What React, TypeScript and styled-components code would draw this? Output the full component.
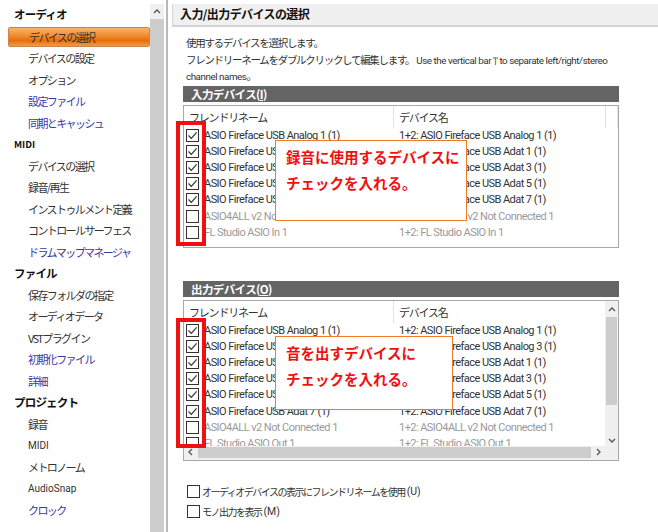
import React from 'react';
import styled, { createGlobalStyle } from 'styled-components';

const GlobalStyle = createGlobalStyle`
  html, body {
    margin: 0;
    padding: 0;
    background: #fff;
  }
  body {
    font-family: Roboto, "Noto Sans CJK JP", sans-serif;
    color: #222;
  }
`;

interface NavItem {
  label: string;
  kind?: 'head' | 'item';
  link?: boolean;
  small?: boolean;
  active?: boolean;
}

const navItems: NavItem[] = [
  { label: 'オーディオ', kind: 'head' },
  { label: 'デバイスの選択', active: true },
  { label: 'デバイスの設定' },
  { label: 'オプション' },
  { label: '設定ファイル', link: true },
  { label: '同期とキャッシュ', link: true },
  { label: 'MIDI', kind: 'head', small: true },
  { label: 'デバイスの選択' },
  { label: '録音/再生' },
  { label: 'インストゥルメント定義' },
  { label: 'コントロールサーフェス' },
  { label: 'ドラムマップマネージャ', link: true },
  { label: 'ファイル', kind: 'head' },
  { label: '保存フォルダの指定' },
  { label: 'オーディオデータ' },
  { label: 'VSTプラグイン' },
  { label: '初期化ファイル', link: true },
  { label: '詳細', link: true },
  { label: 'プロジェクト', kind: 'head' },
  { label: '録音' },
  { label: 'MIDI', small: true },
  { label: 'メトロノーム' },
  { label: 'AudioSnap', small: true },
  { label: 'クロック', link: true },
];

interface DeviceRow {
  name: string;
  device: string;
  checked: boolean;
}

const inputRows: DeviceRow[] = [
  { name: 'ASIO Fireface USB Analog 1 (1)', device: '1+2: ASIO Fireface USB Analog 1 (1)', checked: true },
  { name: 'ASIO Fireface USB Adat 1 (1)', device: '1+2: ASIO Fireface USB Adat 1 (1)', checked: true },
  { name: 'ASIO Fireface USB Adat 3 (1)', device: '1+2: ASIO Fireface USB Adat 3 (1)', checked: true },
  { name: 'ASIO Fireface USB Adat 5 (1)', device: '1+2: ASIO Fireface USB Adat 5 (1)', checked: true },
  { name: 'ASIO Fireface USB Adat 7 (1)', device: '1+2: ASIO Fireface USB Adat 7 (1)', checked: true },
  { name: 'ASIO4ALL v2 Not Connected 1', device: '1+2: ASIO4ALL v2 Not Connected 1', checked: false },
  { name: 'FL Studio ASIO In 1', device: '1+2: FL Studio ASIO In 1', checked: false },
];

const outputRows: DeviceRow[] = [
  { name: 'ASIO Fireface USB Analog 1 (1)', device: '1+2: ASIO Fireface USB Analog 1 (1)', checked: true },
  { name: 'ASIO Fireface USB Analog 3 (1)', device: '1+2: ASIO Fireface USB Analog 3 (1)', checked: true },
  { name: 'ASIO Fireface USB Adat 1 (1)', device: '1+2: ASIO Fireface USB Adat 1 (1)', checked: true },
  { name: 'ASIO Fireface USB Adat 3 (1)', device: '1+2: ASIO Fireface USB Adat 3 (1)', checked: true },
  { name: 'ASIO Fireface USB Adat 5 (1)', device: '1+2: ASIO Fireface USB Adat 5 (1)', checked: true },
  { name: 'ASIO Fireface USB Adat 7 (1)', device: '1+2: ASIO Fireface USB Adat 7 (1)', checked: true },
  { name: 'ASIO4ALL v2 Not Connected 1', device: '1+2: ASIO4ALL v2 Not Connected 1', checked: false },
  { name: 'FL Studio ASIO Out 1', device: '1+2: FL Studio ASIO Out 1', checked: false },
];

function CheckBox({ checked }: { checked: boolean }) {
  return (
    <Box>
      {checked && (
        <svg width="11" height="11" viewBox="0 0 11 11">
          <path d="M1.5 5.5 L4.3 8.3 L9.6 2.4" fill="none" stroke="#333" strokeWidth="1.2" />
        </svg>
      )}
    </Box>
  );
}

function Caret({ dir }: { dir: 'up' | 'down' | 'left' | 'right' }) {
  const d = {
    up: 'M2 6 L5 3 L8 6',
    down: 'M2 4 L5 7 L8 4',
    left: 'M6 2 L3 5 L6 8',
    right: 'M4 2 L7 5 L4 8',
  }[dir];
  return (
    <svg width="10" height="10" viewBox="0 0 10 10">
      <path d={d} fill="none" stroke="#555" strokeWidth="1.3" />
    </svg>
  );
}

function DeviceList({ rows, scroll, height }: { rows: DeviceRow[]; scroll?: boolean; height: number }) {
  return (
    <ListFrame $height={height}>
      <ListInner>
        <ListHead>
          <HeadCell $w={210}>フレンドリネーム</HeadCell>
          <HeadCell $w={212}>デバイス名</HeadCell>
          {!scroll && <HeadCell $w={12} />}
        </ListHead>
        <ListBody>
          {rows.map((r, i) => (
            <Row key={i} $disabled={!r.checked}>
              <NameCell>
                <CheckBox checked={r.checked} />
                <span>{r.name}</span>
              </NameCell>
              <DevCell>{r.device}</DevCell>
            </Row>
          ))}
        </ListBody>
        {scroll && (
          <HScroll>
            <Caret dir="left" />
            <HTrack />
            <Caret dir="right" />
          </HScroll>
        )}
      </ListInner>
      {scroll && (
        <VScroll>
          <Caret dir="up" />
          <VTrack>
            <VThumb />
          </VTrack>
          <Caret dir="down" />
          <Corner />
        </VScroll>
      )}
    </ListFrame>
  );
}

export default function App() {
  return (
    <Page>
      <GlobalStyle />
      <Sidebar>
        {navItems.map((n, i) =>
          n.kind === 'head' ? (
            <NavHead key={i} $small={n.small}>{n.label}</NavHead>
          ) : (
            <NavLink key={i} $link={n.link} $small={n.small} $active={n.active}>
              {n.label}
            </NavLink>
          )
        )}
      </Sidebar>
      <SideScroll>
        <ArrowCell>
          <Caret dir="up" />
        </ArrowCell>
      </SideScroll>
      <Divider />
      <Main>
        <TitleBar>入力/出力デバイスの選択</TitleBar>
        <Content>
          <Desc>
            <p>
              <Jp>使用するデバイスを選択します。</Jp>
            </p>
            <p>
              <Jp>フレンドリーネームをダブルクリックして編集します。</Jp> Use the vertical bar '|' to separate
              left/right/stereo
            </p>
            <p>
              channel names<Jp>。</Jp>
            </p>
          </Desc>
          <Section>
            <SectionBar>
              入力デバイス(<u>I</u>)
            </SectionBar>
            <DeviceList rows={inputRows} height={143} />
          </Section>
          <Section $gap={33}>
            <SectionBar>
              出力デバイス(<u>O</u>)
            </SectionBar>
            <DeviceList rows={outputRows} height={161} scroll />
          </Section>
          <Options>
            <OptionRow>
              <CheckBox checked={false} />
              オーディオデバイスの表示にフレンドリネームを使用<Key>(U)</Key>
            </OptionRow>
            <OptionRow>
              <CheckBox checked={false} />
              モノ出力を表示<Key>(M)</Key>
            </OptionRow>
          </Options>
        </Content>

        <Marker style={{ left: 8, top: 121, height: 125 }} />
        <Marker style={{ left: 8, top: 318, height: 130 }} />
        <Callout style={{ left: 107, top: 140, width: 192, height: 81 }}>
          <p>録音に使用するデバイスに</p>
          <p>チェックを入れる。</p>
        </Callout>
        <Callout style={{ left: 107, top: 336, width: 178, height: 74 }}>
          <p>音を出すデバイスに</p>
          <p>チェックを入れる。</p>
        </Callout>
      </Main>
    </Page>
  );
}

const Page = styled.div`
  width: 658px;
  height: 532px;
  overflow: hidden;
  display: flex;
  background: #fff;
`;

const Sidebar = styled.nav`
  width: 150px;
  flex-shrink: 0;
  padding: 4px 0 0 8px;
  box-sizing: border-box;
  display: flex;
  flex-direction: column;
  white-space: nowrap;
`;

const NavHead = styled.div<{ $small?: boolean }>`
  height: 21.5px;
  line-height: 21.5px;
  padding-left: 6px;
  font-family: "Noto Sans CJK JP", sans-serif;
  font-weight: 700;
  font-size: ${({ $small }) => ($small ? '9.5px' : '11.5px')};
  letter-spacing: ${({ $small }) => ($small ? '0' : '-0.8px')};
  color: #111;
`;

const NavLink = styled.div<{ $link?: boolean; $small?: boolean; $active?: boolean }>`
  height: ${({ $active }) => ($active ? '18.5px' : '21.5px')};
  line-height: ${({ $active }) => ($active ? '18.5px' : '21.5px')};
  margin: ${({ $active }) => ($active ? '1px 0 1px' : '0')};
  padding-left: 20px;
  font-family: ${({ $small }) => ($small ? 'Roboto, sans-serif' : '"Noto Sans CJK JP", sans-serif')};
  font-size: ${({ $small }) => ($small ? '10px' : '11px')};
  letter-spacing: ${({ $small }) => ($small ? '0' : '-1.6px')};
  color: ${({ $link }) => ($link ? '#3a35a8' : '#333')};
  background: ${({ $active }) =>
    $active ? 'linear-gradient(#fbb36a 0%, #f08a2c 45%, #e56f0e 70%, #f59a45 100%)' : 'none'};
  border: ${({ $active }) => ($active ? '1px solid #c98544' : 'none')};
  border-radius: 2px;
`;

const SideScroll = styled.div`
  width: 14px;
  flex-shrink: 0;
  margin-top: 4px;
  background: #cdcdcd;
  display: flex;
  flex-direction: column;
`;

const ArrowCell = styled.div`
  height: 15px;
  background: #f0f0f0;
  display: flex;
  align-items: center;
  justify-content: center;
`;

const Divider = styled.div`
  width: 2px;
  flex-shrink: 0;
  margin-left: 2px;
  background: #b9b9b9;
`;

const Main = styled.main`
  position: relative;
  flex: 1;
  padding: 4px 0 0 4px;
  box-sizing: border-box;
`;

const TitleBar = styled.div`
  height: 21px;
  line-height: 19px;
  padding-left: 7px;
  background: #f0f0f0;
  border-left: 1px solid #d5d5d5;
  border-bottom: 2px solid #d3d3d3;
  font-family: "Noto Sans CJK JP", sans-serif;
  font-weight: 700;
  font-size: 12px;
  letter-spacing: -0.6px;
  color: #111;
`;

const Content = styled.div`
  padding: 8px 0 0 11px;
  width: 447px;
`;

const Desc = styled.div`
  font-family: Roboto, "Noto Sans CJK JP", sans-serif;
  font-size: 9.8px;
  letter-spacing: -0.45px;
  color: #333;
  line-height: 15.5px;
  padding-left: 3px;
  white-space: nowrap;
  p {
    margin: 0;
  }
`;

const Jp = styled.span`
  font-family: "Noto Sans CJK JP", sans-serif;
  font-size: 10.5px;
  letter-spacing: -1.3px;
`;

const Section = styled.section<{ $gap?: number }>`
  margin-top: ${({ $gap }) => ($gap ?? 1)}px;
`;

const SectionBar = styled.div`
  height: 16px;
  line-height: 16px;
  width: 436px;
  padding-left: 8px;
  box-sizing: border-box;
  background: #646464;
  color: #fff;
  font-family: "Noto Sans CJK JP", sans-serif;
  font-weight: 700;
  font-size: 11.5px;
  letter-spacing: -0.6px;
`;

const ListFrame = styled.div<{ $height: number }>`
  margin-top: 3px;
  width: 436px;
  height: ${({ $height }) => $height}px;
  box-sizing: border-box;
  border: 1px solid #a8a8a8;
  display: flex;
  overflow: hidden;
`;

const ListInner = styled.div`
  flex: 1;
  min-width: 0;
  display: flex;
  flex-direction: column;
`;

const ListHead = styled.div`
  height: 22px;
  flex-shrink: 0;
  display: flex;
`;

const HeadCell = styled.div<{ $w: number }>`
  width: ${({ $w }) => $w}px;
  flex-shrink: 0;
  box-sizing: border-box;
  padding-left: 5px;
  line-height: 22px;
  border-right: 1px solid #e3e3e3;
  font-family: "Noto Sans CJK JP", sans-serif;
  font-size: 11px;
  letter-spacing: -1.2px;
  color: #333;
`;

const ListBody = styled.div`
  flex: 1;
  overflow: hidden;
`;

const Row = styled.div<{ $disabled: boolean }>`
  height: 16.1px;
  display: flex;
  align-items: center;
  white-space: nowrap;
  color: ${({ $disabled }) => ($disabled ? '#9a9a9a' : '#333')};
  font-family: Roboto, sans-serif;
  font-size: 11px;
  letter-spacing: -0.55px;
`;

const NameCell = styled.div`
  width: 210px;
  flex-shrink: 0;
  display: flex;
  align-items: center;
  gap: 5px;
  padding-left: 2px;
  box-sizing: border-box;
`;

const DevCell = styled.div`
  padding-left: 5px;
`;

const Box = styled.span`
  width: 11px;
  height: 11px;
  flex-shrink: 0;
  border: 1px solid #333;
  background: #fff;
  display: inline-flex;
  align-items: center;
  justify-content: center;
`;

const HScroll = styled.div`
  height: 13px;
  flex-shrink: 0;
  display: flex;
  align-items: center;
  background: #f0f0f0;
  padding: 0 2px 1px;
`;

const HTrack = styled.div`
  flex: 1;
  height: 11px;
  margin: 0 2px;
  background: #cdcdcd;
`;

const VScroll = styled.div`
  width: 13px;
  flex-shrink: 0;
  background: #f0f0f0;
  display: flex;
  flex-direction: column;
  align-items: center;
  padding-top: 4px;
`;

const VTrack = styled.div`
  flex: 1;
  width: 13px;
  padding-top: 2px;
  box-sizing: border-box;
`;

const VThumb = styled.div`
  height: 88px;
  width: 11px;
  margin: 0 auto;
  background: #cdcdcd;
`;

const Corner = styled.div`
  height: 15px;
  width: 13px;
  background: #f0f0f0;
`;

const Options = styled.div`
  margin-top: 24px;
  padding-left: 4px;
  display: flex;
  flex-direction: column;
  gap: 7px;
`;

const OptionRow = styled.label`
  display: flex;
  align-items: center;
  gap: 2px;
  height: 13px;
  font-family: "Noto Sans CJK JP", sans-serif;
  font-size: 10px;
  letter-spacing: -1.5px;
  color: #333;
  white-space: nowrap;
`;

const Key = styled.span`
  font-family: Roboto, sans-serif;
  font-size: 10.5px;
  letter-spacing: 0;
`;

const Marker = styled.div`
  position: absolute;
  width: 30px;
  box-sizing: border-box;
  border: 4px solid #ee1111;
`;

const Callout = styled.div`
  position: absolute;
  box-sizing: border-box;
  background: #fff;
  border: 1.5px solid #ee7a2a;
  padding: 3px 0 0 10px;
  font-family: "Noto Sans CJK JP", sans-serif;
  font-weight: 700;
  font-size: 14.5px;
  color: #ee1111;
  p {
    margin: 0;
    line-height: 25.5px;
  }
`;
